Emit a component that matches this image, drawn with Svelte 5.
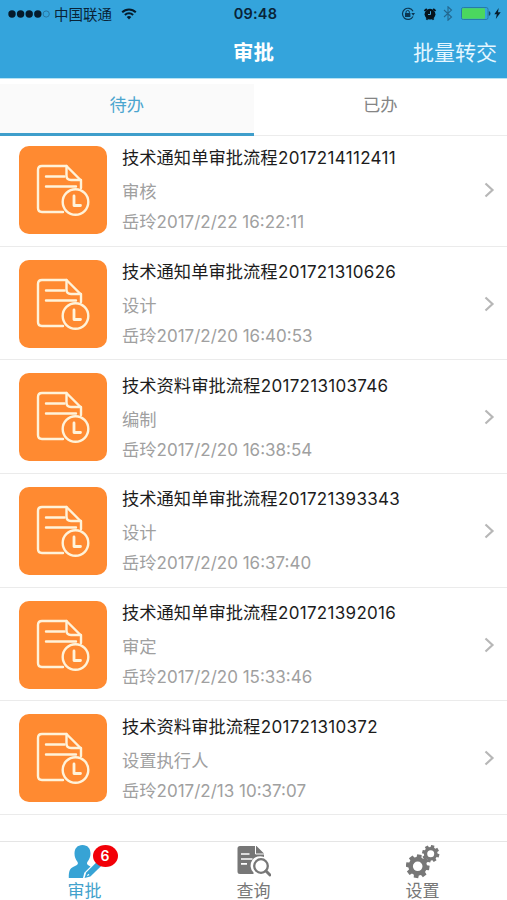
<script lang="ts">
	type View = 'todo' | 'done'
	let activeView = $state<View>('todo')

	const items = [
		{ name: '技术通知单审批流程', code: '2017214112411', step: '审核', user: '岳玲', time: '2017/2/22 16:22:11' },
		{ name: '技术通知单审批流程', code: '201721310626', step: '设计', user: '岳玲', time: '2017/2/20 16:40:53' },
		{ name: '技术资料审批流程', code: '2017213103746', step: '编制', user: '岳玲', time: '2017/2/20 16:38:54' },
		{ name: '技术通知单审批流程', code: '201721393343', step: '设计', user: '岳玲', time: '2017/2/20 16:37:40' },
		{ name: '技术通知单审批流程', code: '201721392016', step: '审定', user: '岳玲', time: '2017/2/20 15:33:46' },
		{ name: '技术资料审批流程', code: '201721310372', step: '设置执行人', user: '岳玲', time: '2017/2/13 10:37:07' }
	]

	// outline of a cog with eight teeth and a round hole
	function gear(cx: number, cy: number, outer: number, inner: number, hole: number, turn = 0) {
		const points: string[] = []
		for (let i = 0; i < 8; i++) {
			const mid = (i * Math.PI) / 4 + turn
			for (const [r, a] of [
				[inner, -0.27],
				[outer, -0.19],
				[outer, 0.19],
				[inner, 0.27]
			]) {
				points.push(`${(cx + r * Math.cos(mid + a)).toFixed(2)} ${(cy + r * Math.sin(mid + a)).toFixed(2)}`)
			}
		}
		return `M${points.join('L')}ZM${cx - hole} ${cy}a${hole} ${hole} 0 1 0 ${hole * 2} 0a${hole} ${hole} 0 1 0 ${-hole * 2} 0Z`
	}
</script>

<div class="screen">
	<header>
		<div class="status">
			<div class="carrier">
				<svg width="42" height="10" viewBox="0 0 42 10">
					{#each [4, 12.6, 21.2, 29.8] as x}
						<circle cx={x} cy="5" r="3.7" fill="#051b2b" />
					{/each}
					<circle cx="38.2" cy="5" r="3.1" fill="none" stroke="#286f98" stroke-width=".9" />
				</svg>
				<span>中国联通</span>
				<svg class="wifi" width="16" height="12" viewBox="0 0 16 12">
					<g fill="none" stroke="#051b2b" stroke-width="2">
						<path d="M1.2 4.3a9.6 9.6 0 0 1 13.6 0" />
						<path d="M3.9 7a5.8 5.8 0 0 1 8.2 0" />
					</g>
					<path d="M8 11.5 5.7 9.1a3.2 3.2 0 0 1 4.6 0Z" fill="#051b2b" />
				</svg>
			</div>
			<span class="clock">09:48</span>
			<div class="indicators">
				<svg width="14" height="14" viewBox="0 0 14 14">
					<path d="M12 9.5A5.6 5.6 0 1 1 12 4.2" fill="none" stroke="#0b3652" stroke-width="1.2" />
					<path d="M10.3 6h3.7l-1.8 2.7Z" fill="#0b3652" />
					<path d="M5 6.4V5.2a1.7 1.7 0 0 1 3.4 0v1.2" fill="none" stroke="#0b3652" />
					<rect x="4" y="6" width="5.4" height="4" fill="#0b3652" />
				</svg>
				<svg class="alarm" width="14" height="14" viewBox="0 0 14 14">
					<circle cx="7" cy="7.2" r="5.4" fill="#06131c" />
					<path d="M1.4 3.9 3.8 1.9M12.6 3.9 10.2 1.9M3.4 12.7l1-1.2M10.6 12.7l-1-1.2" stroke="#06131c" stroke-width="1.8" />
					<path d="M7.5 4.2v3.3H5" fill="none" stroke="#44a7d9" />
				</svg>
				<svg class="bluetooth" width="10" height="15" viewBox="0 0 10 15">
					<path d="m1 4 7.5 7L5 14.2V.8l3.5 3.3L1 11" fill="none" stroke="#23678f" stroke-width="1.1" />
				</svg>
				<svg class="battery" width="30" height="13" viewBox="0 0 30 13">
					<rect x=".5" y=".5" width="26.5" height="12" rx="1.8" fill="none" stroke="#287ba7" />
					<rect x="1" y="1.2" width="23" height="10.6" rx="1" fill="#4bd75f" />
					<path d="M27.8 4.3q1.7 0 1.7 2.2t-1.7 2.2Z" fill="#164c6b" />
				</svg>
				<svg width="7" height="11" viewBox="0 0 7 11">
					<path d="M4.7 0 .3 6.2h2.5L1.8 11l4.9-6.7H4Z" fill="#061d2d" />
				</svg>
			</div>
		</div>
		<div class="navbar">
			<h1>审批</h1>
			<button>批量转交</button>
		</div>
	</header>

	<div class="tabs" role="group">
		<button class:active={activeView === 'todo'} onclick={() => (activeView = 'todo')}>待办</button>
		<button class:active={activeView === 'done'} onclick={() => (activeView = 'done')}>已办</button>
	</div>

	<ul class="list">
		{#each items as item (item.code)}
			<li>
				<svg width="88" height="88" viewBox="0 0 88 88">
					<rect width="88" height="88" rx="10" fill="#ff8a31" />
					<g fill="none" stroke="#fff3da" stroke-width="2.4" stroke-linejoin="round" stroke-linecap="round">
						<path d="M44 66H23q-4 0-4-4V24q0-4 4-4h24.5L62 34.500V42" />
						<path d="M47.500 20v9.500q0 4.500 4.500 4.500h10" />
						<path d="M27 30.500h18.500M27 40.500h30" />
						<circle cx="56.500" cy="56" r="12.800" />
						<path d="M55 50v9.500h6.500" stroke-width="2.800" />
					</g>
				</svg>
				<div class="text">
					<div class="name">{item.name}<span class="code">{item.code}</span></div>
					<div class="step">{item.step}</div>
					<div class="meta">{item.user}<span class="time">{item.time}</span></div>
				</div>
				<svg width="11" height="16" viewBox="0 0 11 16">
					<path d="m1.5 1.5 7 6.5-7 6.5" fill="none" stroke="#b7b7b7" stroke-width="2.2" />
				</svg>
			</li>
		{/each}
	</ul>

	<nav>
		<a class="active" href="#approve">
			<span class="icon">
				<svg width="34" height="34" viewBox="0 0 34 34">
					<path
						d="M14.5 0c5.200 0 8 3.500 8 8.500 0 3.500-1.300 6-3 8.200-.9 1.300-.6 2.700.8 3.500l2.200 1.300-6.200 6.300-1.300 5.200H.8C.6 26.500 1.800 23.400 5.500 21.700l3-1.500c1.500-.8 1.800-2.100.9-3.500C7.700 14.500 6.500 12 6.500 8.500c0-5 2.800-8.500 8-8.500Z"
						fill="#37a3d5"
					/>
					<path d="m16.600 33 1.600-5.400L29 16.700l4.200 4.200-10.800 10.700Z" fill="#37a3d5" />
					<path d="m18.700 31.200 1.500-2.400 1.300 1.300Z" fill="#fff" />
				</svg>
				<span class="badge">6</span>
			</span>
			审批
		</a>
		<a href="#search">
			<span class="icon">
				<svg width="34" height="34" viewBox="0 0 34 34">
					<path d="M.5 3.500Q.5 1 3 1h16.500L27 8.500V12a9.500 9.500 0 0 0-10.500 15.500V29H3Q.5 29 .5 26.500Z" fill="#777" />
					<path d="M18.500 1v8H27" fill="none" stroke="#fff" />
					<path d="M4 9h8.500M4 14h11.500M4 18.800h6" stroke="#fff" stroke-width="1.700" />
					<circle cx="24" cy="21" r="6.800" fill="#fff" stroke="#777" stroke-width="2.300" />
					<path d="m29 26 4 4" stroke="#777" stroke-width="3" stroke-linecap="round" />
				</svg>
			</span>
			查询
		</a>
		<a href="#settings">
			<span class="icon">
				<svg width="34" height="34" viewBox="0 0 34 34">
					<path d={gear(11.7, 21.3, 12, 9.3, 4.8, 0.15)} fill="#777" fill-rule="evenodd" />
					<path d={gear(24.7, 8.7, 8.8, 6.8, 3.5, 0.25)} fill="#777" fill-rule="evenodd" />
				</svg>
			</span>
			设置
		</a>
	</nav>
</div>

<style>
	:global(body) {
		margin: 0;
		background: white;
	}

	.screen {
		display: flex;
		flex-direction: column;
		height: 900px;
		overflow: hidden;
		background: white;
		font-family: Inter, 'Noto Sans CJK SC', sans-serif;
	}

	button {
		border: none;
		padding: 0;
		background: transparent;
		font: inherit;
	}

	svg {
		display: block;
		flex: none;
	}

	header {
		box-sizing: border-box;
		height: 79px;
		background: #34a4dc;
		border-bottom: 1px solid #b5e3f4;
	}

	.status {
		display: grid;
		grid-template-columns: 1fr auto 1fr;
		align-items: center;
		height: 27px;
		padding: 0 6px 0 8px;
		color: #092337;
		font-size: 14.5px;
	}

	.carrier,
	.indicators {
		display: flex;
		align-items: center;
	}

	.carrier span {
		margin-left: 4px;
	}

	.wifi {
		margin-left: 9px;
	}

	.clock {
		padding-left: 2px;
		font-size: 14.5px;
		font-weight: 600;
		letter-spacing: 0.2px;
	}

	.indicators {
		justify-content: flex-end;
	}

	.alarm {
		margin-left: 8px;
	}

	.bluetooth {
		margin: 0 8px 0 6px;
	}

	.battery {
		margin-right: 3px;
	}

	.navbar {
		display: grid;
		grid-template-columns: 1fr auto 1fr;
		align-items: center;
		height: 51px;
		padding: 0 10px;
		color: white;

		h1 {
			grid-column: 2;
			margin: 0;
			font-size: 20.5px;
			font-weight: 600;
			line-height: 30px;
		}

		button {
			justify-self: end;
			color: #e4f6ff;
			font-size: 21px;
			line-height: 30px;
		}
	}

	.tabs {
		display: grid;
		grid-template-columns: 1fr 1fr;
		flex: none;
		height: 57px;
		position: relative;
		z-index: 1;

		button {
			box-sizing: border-box;
			padding-bottom: 8px;
			border-bottom: 1px solid #ececec;
			color: #858585;
			font-size: 17.3px;
		}

		button.active {
			padding-bottom: 6px;
			border-bottom: 3px solid #3e9ecb;
			background: linear-gradient(white 5px, #fafafa 5px);
			color: #4ba5cf;
		}
	}

	.list {
		flex: 1;
		margin: -3px 0 0;
		padding: 0;
		list-style: none;
	}

	.list li {
		box-sizing: border-box;
		display: flex;
		align-items: center;
		height: 113.7px;
		padding: 1px 12px 0 19px;
		border-bottom: 1px solid #ebebeb;
	}

	.text {
		flex: 1;
		padding-left: 15px;
		margin-top: -3px;
		color: #a0a0a0;
		font-size: 17.3px;
		white-space: nowrap;
	}

	.name {
		color: #1c1c1c;
		line-height: 34px;
	}

	.step {
		line-height: 34px;
	}

	.meta {
		line-height: 25px;
	}

	.code,
	.time {
		font-size: 17px;
	}

	.code {
		margin-left: 0.5px;
		letter-spacing: 0.3px;
	}

	nav {
		display: grid;
		grid-template-columns: repeat(3, 1fr);
		box-sizing: border-box;
		height: 59px;
		padding-top: 3px;
		border-top: 1px solid #e5e5e5;
	}

	nav a {
		display: flex;
		flex-direction: column;
		align-items: center;
		color: #777;
		font-size: 17px;
		line-height: 24px;
		text-decoration: none;

		&.active {
			color: #42a2cc;
		}
	}

	.icon {
		position: relative;
	}

	.badge {
		position: absolute;
		top: 0;
		left: 25px;
		width: 25px;
		height: 22px;
		border-radius: 50%;
		background: #f20008;
		color: white;
		font-size: 14px;
		font-weight: 600;
		line-height: 22px;
		text-align: center;
	}
</style>
